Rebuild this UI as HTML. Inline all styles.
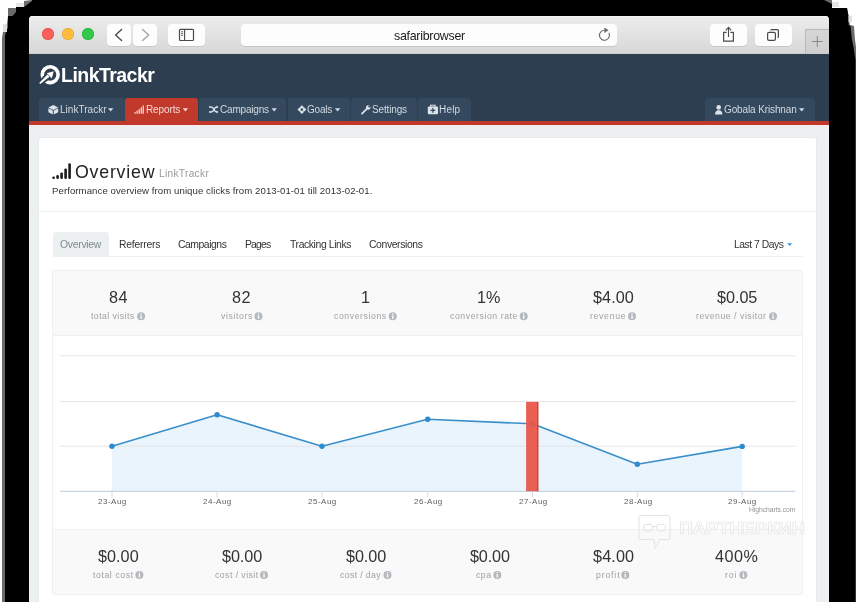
<!DOCTYPE html>
<html><head><meta charset="utf-8"><style>
html,body{margin:0;padding:0;}
body{width:857px;height:602px;position:relative;overflow:hidden;background:#fff;font-family:"Liberation Sans",sans-serif;}
.t{position:absolute;white-space:nowrap;will-change:transform;}
svg{position:absolute;left:0;top:0;}
</style></head><body>
<svg width="857" height="602" style="position:absolute;left:0;top:0;"><path d="M2,602 L2,38 L3,32 L6,31 L8,16 L8,8 L16,8 L16,7 L24,7 L24,1 L32,0 L832,0 L832,8 L847,8 L848.5,16 L850,25 L854,26 L855,40 L856,47 L856,602 Z" fill="#6b6b6b"/><path d="M5,602 L5,36 L6.5,30 L8,28 L8,16 L12.5,16 L16,12 L16,7 L24,7 L32,1 L32,0 L824,0 L832,4 L832,8 L847,8 L848.5,16 L848.5,25 L850.5,26 L852,40 L853.5,47 L855.5,60 L855.5,602 Z" fill="#000"/><rect x="16" y="3" width="8" height="4" fill="#e6e6e6"/><rect x="3" y="24" width="4" height="8" fill="#e0e0e0"/><rect x="832" y="2" width="7" height="5" fill="#e6e6e6"/><rect x="848.5" y="16" width="3.5" height="6" fill="#e0e0e0"/></svg>
<div id="win" style="position:absolute;left:29px;top:16px;width:800px;height:600px;background:#ecf0f1;border-radius:4px 4px 0 0;overflow:hidden;">
<div style="position:absolute;left:0;top:0;width:800px;height:38px;background:linear-gradient(#ededed,#d7d7d7);"></div>
<div style="position:absolute;left:0;top:0;width:800px;height:1px;background:#f6f6f6;"></div>
<div style="position:absolute;left:0;top:37px;width:800px;height:1px;background:#cdcdcd;"></div>
</div>
<div style="position:absolute;left:42px;top:28px;width:12px;height:12px;border-radius:50%;background:#fc605c;box-shadow:inset 0 0 0 0.5px #e0443e;"></div>
<div style="position:absolute;left:62px;top:28px;width:12px;height:12px;border-radius:50%;background:#fdbc40;box-shadow:inset 0 0 0 0.5px #dea123;"></div>
<div style="position:absolute;left:82px;top:28px;width:12px;height:12px;border-radius:50%;background:#34c84a;box-shadow:inset 0 0 0 0.5px #1aab29;"></div>
<div style="position:absolute;left:107px;top:24px;width:24px;height:22px;background:#fdfdfd;border-radius:4px;box-shadow:0 0.5px 0.5px rgba(0,0,0,0.18);"></div>
<div style="position:absolute;left:133px;top:24px;width:24px;height:22px;background:#fdfdfd;border-radius:4px;box-shadow:0 0.5px 0.5px rgba(0,0,0,0.18);"></div>
<div style="position:absolute;left:168px;top:24px;width:37px;height:22px;background:#fdfdfd;border-radius:4px;box-shadow:0 0.5px 0.5px rgba(0,0,0,0.18);"></div>
<div style="position:absolute;left:241px;top:24px;width:376px;height:22px;background:#fdfdfd;border-radius:4px;box-shadow:0 0.5px 0.5px rgba(0,0,0,0.18);"></div>
<div style="position:absolute;left:710px;top:24px;width:37px;height:22px;background:#fdfdfd;border-radius:4px;box-shadow:0 0.5px 0.5px rgba(0,0,0,0.18);"></div>
<div style="position:absolute;left:755px;top:24px;width:37px;height:22px;background:#fdfdfd;border-radius:4px;box-shadow:0 0.5px 0.5px rgba(0,0,0,0.18);"></div>
<div style="position:absolute;left:805px;top:29px;width:24px;height:25px;background:linear-gradient(#d6d6d6,#cfcfcf);border-left:1px solid #b8b8b8;border-top:1px solid #b8b8b8;box-sizing:border-box;"></div>
<div class="t" style="left:394.12px;top:29.00px;font-size:12.4px;line-height:14px;color:#1a1a1a;letter-spacing:-0.266px;">safaribrowser</div>
<div style="position:absolute;left:29px;top:54px;width:800px;height:67px;background:#2c3e50;"></div>
<div style="position:absolute;left:29px;top:121px;width:800px;height:3.5px;background:#c0392b;"></div>
<div style="position:absolute;left:29px;top:124.5px;width:800px;height:1px;background:#f6eaea;"></div>
<div class="t" style="left:60.59px;top:64.00px;font-size:19.5px;line-height:22px;color:#ffffff;letter-spacing:-0.534px;font-weight:bold;">LinkTrackr</div>
<div style="position:absolute;left:39.3px;top:97.7px;width:85.3px;height:26.299999999999997px;background:#34495e;border-radius:3px 3px 0 0;"></div>
<div style="position:absolute;left:125.1px;top:97.7px;width:73.0px;height:26.299999999999997px;background:#c0392b;border-radius:3px 3px 0 0;"></div>
<div style="position:absolute;left:198.6px;top:97.7px;width:87.4px;height:26.299999999999997px;background:#34495e;border-radius:3px 3px 0 0;"></div>
<div style="position:absolute;left:287.5px;top:97.7px;width:62.80000000000001px;height:26.299999999999997px;background:#34495e;border-radius:3px 3px 0 0;"></div>
<div style="position:absolute;left:351.3px;top:97.7px;width:65.59999999999997px;height:26.299999999999997px;background:#34495e;border-radius:3px 3px 0 0;"></div>
<div style="position:absolute;left:418.3px;top:97.7px;width:52.5px;height:26.299999999999997px;background:#34495e;border-radius:3px 3px 0 0;"></div>
<div style="position:absolute;left:705.1px;top:97.7px;width:109.5px;height:26.299999999999997px;background:#34495e;border-radius:3px 3px 0 0;"></div>
<div style="position:absolute;left:29px;top:121px;width:800px;height:3.5px;background:#c0392b;"></div>
<div class="t" style="left:59.97px;top:104.00px;font-size:10px;line-height:11px;color:#d3dae1;letter-spacing:0.028px;">LinkTrackr</div>
<div class="t" style="left:146.07px;top:104.00px;font-size:10px;line-height:11px;color:#f6d9d5;letter-spacing:-0.108px;">Reports</div>
<div class="t" style="left:220.24px;top:104.00px;font-size:10px;line-height:11px;color:#d3dae1;letter-spacing:-0.191px;">Campaigns</div>
<div class="t" style="left:307.45px;top:104.00px;font-size:10px;line-height:11px;color:#d3dae1;letter-spacing:-0.219px;">Goals</div>
<div class="t" style="left:372.14px;top:104.00px;font-size:10px;line-height:11px;color:#d3dae1;letter-spacing:-0.147px;">Settings</div>
<div class="t" style="left:439.27px;top:104.00px;font-size:10px;line-height:11px;color:#d3dae1;letter-spacing:0.180px;">Help</div>
<div class="t" style="left:724.15px;top:104.00px;font-size:10px;line-height:11px;color:#d3dae1;letter-spacing:-0.124px;">Gobala Krishnan</div>
<div style="position:absolute;left:38px;top:137px;width:778.5px;height:480px;background:#fff;border:1px solid #e6eaec;border-radius:3px;box-sizing:border-box;"></div>
<div style="position:absolute;left:39px;top:211px;width:777px;height:1px;background:#eef1f2;"></div>
<div class="t" style="left:74.80px;top:162.00px;font-size:17.8px;line-height:20px;color:#222;letter-spacing:0.773px;">Overview</div>
<div class="t" style="left:159.27px;top:168.00px;font-size:10.2px;line-height:11px;color:#999;letter-spacing:0.289px;">LinkTrackr</div>
<div class="t" style="left:52.22px;top:185.00px;font-size:9.6px;line-height:11px;color:#333;letter-spacing:0.081px;">Performance overview from unique clicks from 2013-01-01 till 2013-02-01.</div>
<div style="position:absolute;left:52.6px;top:231.9px;width:56.5px;height:24.6px;background:#ecf0f1;border-radius:3px 3px 0 0;"></div>
<div style="position:absolute;left:53px;top:256px;width:750px;height:1px;background:#eef0f1;"></div>
<div class="t" style="left:60.07px;top:239.00px;font-size:10.4px;line-height:11px;color:#7f8c8d;letter-spacing:-0.280px;">Overview</div>
<div class="t" style="left:119.00px;top:239.00px;font-size:10.4px;line-height:11px;color:#333;letter-spacing:-0.240px;">Referrers</div>
<div class="t" style="left:178.22px;top:239.00px;font-size:10.4px;line-height:11px;color:#333;letter-spacing:-0.465px;">Campaigns</div>
<div class="t" style="left:245.00px;top:239.00px;font-size:10.4px;line-height:11px;color:#333;letter-spacing:-0.846px;">Pages</div>
<div class="t" style="left:289.56px;top:239.00px;font-size:10.4px;line-height:11px;color:#333;letter-spacing:-0.398px;">Tracking Links</div>
<div class="t" style="left:369.12px;top:239.00px;font-size:10.4px;line-height:11px;color:#333;letter-spacing:-0.385px;">Conversions</div>
<div class="t" style="left:733.55px;top:239.00px;font-size:10.4px;line-height:11px;color:#333;letter-spacing:-0.497px;">Last 7 Days</div>
<div style="position:absolute;left:52px;top:270px;width:751px;height:65px;background:#f9f9f9;border:1px solid #f0f0f0;border-bottom:none;border-radius:3px 3px 0 0;box-sizing:border-box;"></div>
<div style="position:absolute;left:52px;top:335px;width:751px;height:193.5px;background:#fff;border-left:1px solid #f0f0f0;border-right:1px solid #f0f0f0;border-top:1px solid #f0f0f0;box-sizing:border-box;"></div>
<div style="position:absolute;left:52px;top:528.5px;width:751px;height:66.5px;background:#f9f9f9;border:1px solid #f0f0f0;border-top:1px solid #eef0f2;border-radius:0 0 3px 3px;box-sizing:border-box;"></div>
<div class="t" style="left:108.55px;top:288.00px;font-size:16.2px;line-height:18px;color:#333;letter-spacing:0.537px;">84</div>
<div class="t" style="left:91.00px;top:311.00px;font-size:8.7px;line-height:10px;color:#a0a0a0;letter-spacing:0.455px;">total visits</div>
<div class="t" style="left:232.35px;top:288.00px;font-size:16.2px;line-height:18px;color:#333;letter-spacing:0.584px;">82</div>
<div class="t" style="left:220.75px;top:311.00px;font-size:8.7px;line-height:10px;color:#a0a0a0;letter-spacing:0.617px;">visitors</div>
<div class="t" style="left:361.25px;top:288.00px;font-size:16.2px;line-height:18px;color:#333;letter-spacing:0.000px;">1</div>
<div class="t" style="left:334.08px;top:311.00px;font-size:8.7px;line-height:10px;color:#a0a0a0;letter-spacing:0.582px;">conversions</div>
<div class="t" style="left:477.25px;top:288.00px;font-size:16.2px;line-height:18px;color:#333;letter-spacing:0.068px;">1%</div>
<div class="t" style="left:450.08px;top:311.00px;font-size:8.7px;line-height:10px;color:#a0a0a0;letter-spacing:0.569px;">conversion rate</div>
<div class="t" style="left:592.83px;top:288.00px;font-size:16.2px;line-height:18px;color:#333;letter-spacing:0.091px;">$4.00</div>
<div class="t" style="left:589.59px;top:311.00px;font-size:8.7px;line-height:10px;color:#a0a0a0;letter-spacing:0.683px;">revenue</div>
<div class="t" style="left:716.53px;top:288.00px;font-size:16.2px;line-height:18px;color:#333;letter-spacing:-0.038px;">$0.05</div>
<div class="t" style="left:695.89px;top:311.00px;font-size:8.7px;line-height:10px;color:#a0a0a0;letter-spacing:0.536px;">revenue / visitor</div>
<div class="t" style="left:98.03px;top:547.00px;font-size:16.2px;line-height:18px;color:#333;letter-spacing:0.038px;">$0.00</div>
<div class="t" style="left:92.80px;top:570.00px;font-size:8.7px;line-height:10px;color:#a0a0a0;letter-spacing:0.594px;">total cost</div>
<div class="t" style="left:222.03px;top:547.00px;font-size:16.2px;line-height:18px;color:#333;letter-spacing:-0.079px;">$0.00</div>
<div class="t" style="left:214.78px;top:570.00px;font-size:8.7px;line-height:10px;color:#a0a0a0;letter-spacing:0.456px;">cost / visit</div>
<div class="t" style="left:346.03px;top:547.00px;font-size:16.2px;line-height:18px;color:#333;letter-spacing:-0.079px;">$0.00</div>
<div class="t" style="left:339.78px;top:570.00px;font-size:8.7px;line-height:10px;color:#a0a0a0;letter-spacing:0.373px;">cost / day</div>
<div class="t" style="left:469.53px;top:547.00px;font-size:16.2px;line-height:18px;color:#333;letter-spacing:-0.139px;">$0.00</div>
<div class="t" style="left:476.08px;top:570.00px;font-size:8.7px;line-height:10px;color:#a0a0a0;letter-spacing:0.504px;">cpa</div>
<div class="t" style="left:592.53px;top:547.00px;font-size:16.2px;line-height:18px;color:#333;letter-spacing:0.151px;">$4.00</div>
<div class="t" style="left:595.52px;top:570.00px;font-size:8.7px;line-height:10px;color:#a0a0a0;letter-spacing:0.846px;">profit</div>
<div class="t" style="left:715.11px;top:547.00px;font-size:16.2px;line-height:18px;color:#333;letter-spacing:0.458px;">400%</div>
<div class="t" style="left:725.09px;top:570.00px;font-size:8.7px;line-height:10px;color:#a0a0a0;letter-spacing:0.942px;">roi</div>
<div class="t" style="left:98.23px;top:497.00px;font-size:8px;line-height:9px;color:#606060;letter-spacing:0.499px;">23-Aug</div>
<div class="t" style="left:203.33px;top:497.00px;font-size:8px;line-height:9px;color:#606060;letter-spacing:0.499px;">24-Aug</div>
<div class="t" style="left:308.23px;top:497.00px;font-size:8px;line-height:9px;color:#606060;letter-spacing:0.499px;">25-Aug</div>
<div class="t" style="left:413.93px;top:497.00px;font-size:8px;line-height:9px;color:#606060;letter-spacing:0.499px;">26-Aug</div>
<div class="t" style="left:518.73px;top:497.00px;font-size:8px;line-height:9px;color:#606060;letter-spacing:0.499px;">27-Aug</div>
<div class="t" style="left:623.53px;top:497.00px;font-size:8px;line-height:9px;color:#606060;letter-spacing:0.499px;">28-Aug</div>
<div class="t" style="left:728.43px;top:497.00px;font-size:8px;line-height:9px;color:#606060;letter-spacing:0.499px;">29-Aug</div>
<div class="t" style="left:749.43px;top:506.00px;font-size:6.8px;line-height:7px;color:#959595;letter-spacing:-0.055px;">Highcharts.com</div>
<svg width="857" height="602" viewBox="0 0 857 602"><polyline points="121.6,29.5 115.6,35 121.6,40.6" fill="none" stroke="#4a4a4a" stroke-width="1.4" stroke-linecap="round" stroke-linejoin="round"/>
<polyline points="142.6,29.5 148.6,35 142.6,40.6" fill="none" stroke="#a6a6a6" stroke-width="1.4" stroke-linecap="round" stroke-linejoin="round"/>
<rect x="179.5" y="29.3" width="14" height="11.2" rx="1" fill="none" stroke="#4a4a4a" stroke-width="1.2"/>
<line x1="184.6" y1="29.3" x2="184.6" y2="40.5" stroke="#4a4a4a" stroke-width="1.1"/>
<line x1="181" y1="31.8" x2="183.2" y2="31.8" stroke="#4a4a4a" stroke-width="0.8"/>
<line x1="181" y1="33.6" x2="183.2" y2="33.6" stroke="#4a4a4a" stroke-width="0.8"/>
<line x1="181" y1="35.4" x2="183.2" y2="35.4" stroke="#4a4a4a" stroke-width="0.8"/>
<path d="M604.8,30.3 A5,5 0 1 0 608.8,32.8" fill="none" stroke="#6a6a6a" stroke-width="1.1"/>
<polygon points="604.4,27.5 608.6,30.3 604.4,33.1" fill="#6a6a6a"/>
<path d="M726.6,32.4 H723.6 V41.2 H733.4 V32.4 H730.4" fill="none" stroke="#4a4a4a" stroke-width="1.2" stroke-linejoin="round"/>
<line x1="728.5" y1="27.6" x2="728.5" y2="37" stroke="#4a4a4a" stroke-width="1.1"/>
<polyline points="725.8,30.4 728.5,27.4 731.2,30.4" fill="none" stroke="#4a4a4a" stroke-width="1.1"/>
<rect x="767.6" y="32.4" width="7.8" height="8" rx="1.4" fill="none" stroke="#4a4a4a" stroke-width="1.2"/>
<path d="M770.6,30.6 Q770.6,29.6 771.6,29.6 H777.4 Q778.4,29.6 778.4,30.6 V36.4 Q778.4,37.4 777.4,37.4" fill="none" stroke="#4a4a4a" stroke-width="1.2"/>
<line x1="811.8" y1="41.5" x2="822.8" y2="41.5" stroke="#888" stroke-width="1"/>
<line x1="817.3" y1="36" x2="817.3" y2="47" stroke="#888" stroke-width="1"/>
<circle cx="50.2" cy="74.7" r="7.9" fill="none" stroke="#fff" stroke-width="3.6"/>
<polygon points="38.6,82.4 46.6,73.8 50.4,77.6 41,84.6" fill="#2c3e50" stroke="#2c3e50" stroke-width="1.6" stroke-linejoin="round"/>
<polygon points="39.2,82.9 47.4,74.6 49.6,76.8 40.3,83.9" fill="#fff"/>
<polygon points="53.7,71.3 46.6,73.3 48.6,75 50,76.4 51.8,78.4" fill="#fff"/>
<polygon points="108,108.3 113.4,108.3 110.7,111.4" fill="#d3dae1"/>
<polygon points="182.7,108.3 188.1,108.3 185.39999999999998,111.4" fill="#f6d9d5"/>
<polygon points="271.5,108.3 276.9,108.3 274.2,111.4" fill="#d3dae1"/>
<polygon points="334.9,108.3 340.29999999999995,108.3 337.59999999999997,111.4" fill="#d3dae1"/>
<polygon points="799,108.3 804.4,108.3 801.7,111.4" fill="#d3dae1"/>
<g fill="#dce3ea"><polygon points="53.3,104.9 58.2,107.4 53.3,109.9 48.4,107.4"/><polygon points="48.4,108.3 52.8,110.6 52.8,114.6 48.4,112.2"/><polygon points="58.2,108.3 53.8,110.6 53.8,114.6 58.2,112.2"/></g>
<rect x="134.4" y="112.10000000000001" width="1.3" height="1.6" fill="#f6d9d5"/>
<rect x="136.5" y="110.7" width="1.3" height="3.0" fill="#f6d9d5"/>
<rect x="138.6" y="109.10000000000001" width="1.3" height="4.6" fill="#f6d9d5"/>
<rect x="140.7" y="107.3" width="1.3" height="6.4" fill="#f6d9d5"/>
<rect x="142.6" y="105.4" width="1.3" height="8.3" fill="#f6d9d5"/>
<g fill="none" stroke="#dce3ea" stroke-width="1.4"><path d="M209,107 H211 Q213,107 214,109.5 Q215,112 217,112 H217.5"/><path d="M209,112 H211 Q213,112 214,109.5 Q215,107 217,107 H217.5"/></g>
<polygon points="216.6,105.4 218.4,107 216.6,108.6" fill="#dce3ea"/><polygon points="216.6,110.4 218.4,112 216.6,113.6" fill="#dce3ea"/>
<polygon points="301.9,105.2 306.3,109.6 301.9,114 297.5,109.6" fill="#dce3ea"/><rect x="300.9" y="108.6" width="2" height="2" fill="#1f2d3a"/><g stroke="#34495e" stroke-width="0.6" opacity="0.7"><line x1="299.6" y1="107.3" x2="300.6" y2="108.3"/><line x1="304.2" y1="107.3" x2="303.2" y2="108.3"/><line x1="299.6" y1="111.9" x2="300.6" y2="110.9"/><line x1="304.2" y1="111.9" x2="303.2" y2="110.9"/></g>
<g fill="#dce3ea"><circle cx="368.2" cy="107.5" r="2.3"/><line x1="362" y1="113.6" x2="367.5" y2="108.2" stroke="#dce3ea" stroke-width="1.8" stroke-linecap="round"/></g><circle cx="369.2" cy="106.5" r="1" fill="#34495e"/>
<rect x="427.8" y="106.6" width="10.2" height="7.6" rx="1" fill="#dce3ea"/><rect x="430.6" y="105.2" width="4.6" height="2.2" fill="none" stroke="#dce3ea" stroke-width="1"/><path d="M432.9,108 V112.8 M430.5,110.4 H435.3" stroke="#34495e" stroke-width="1.3"/>
<circle cx="718.7" cy="107.4" r="2.3" fill="#dce3ea"/><path d="M715,114.4 Q715,110.4 718.7,110.2 Q722.4,110.4 722.4,114.4 Z" fill="#dce3ea"/>
<rect x="52.300000000000004" y="176.5" width="2.6" height="2.5" rx="1.2" fill="#1a1a1a"/>
<rect x="56.300000000000004" y="175.1" width="2.6" height="3.9" rx="1.2" fill="#1a1a1a"/>
<rect x="60.300000000000004" y="172.6" width="2.6" height="6.4" rx="1.2" fill="#1a1a1a"/>
<rect x="64.3" y="168.6" width="2.6" height="10.4" rx="1.2" fill="#1a1a1a"/>
<rect x="68.3" y="163.2" width="2.6" height="15.8" rx="1.2" fill="#1a1a1a"/>
<polygon points="787.2,243.3 792.2,243.3 789.7,246" fill="#3498db"/>
<circle cx="141.05" cy="316.3" r="4" fill="#b4b9be"/><rect x="140.35000000000002" y="315.40000000000003" width="1.5" height="3.4" fill="#f9f9f9"/><circle cx="141.05" cy="314.0" r="0.8" fill="#f9f9f9"/>
<circle cx="258.45" cy="316.3" r="4" fill="#b4b9be"/><rect x="257.75" y="315.40000000000003" width="1.5" height="3.4" fill="#f9f9f9"/><circle cx="258.45" cy="314.0" r="0.8" fill="#f9f9f9"/>
<circle cx="392.75" cy="316.3" r="4" fill="#b4b9be"/><rect x="392.05" y="315.40000000000003" width="1.5" height="3.4" fill="#f9f9f9"/><circle cx="392.75" cy="314.0" r="0.8" fill="#f9f9f9"/>
<circle cx="523.7" cy="316.3" r="4" fill="#b4b9be"/><rect x="523.0" y="315.40000000000003" width="1.5" height="3.4" fill="#f9f9f9"/><circle cx="523.7" cy="314.0" r="0.8" fill="#f9f9f9"/>
<circle cx="632.0" cy="316.3" r="4" fill="#b4b9be"/><rect x="631.3" y="315.40000000000003" width="1.5" height="3.4" fill="#f9f9f9"/><circle cx="632.0" cy="314.0" r="0.8" fill="#f9f9f9"/>
<circle cx="773.0" cy="316.3" r="4" fill="#b4b9be"/><rect x="772.3" y="315.40000000000003" width="1.5" height="3.4" fill="#f9f9f9"/><circle cx="773.0" cy="314.0" r="0.8" fill="#f9f9f9"/>
<circle cx="139.35" cy="575" r="4" fill="#b4b9be"/><rect x="138.65" y="574.1" width="1.5" height="3.4" fill="#f9f9f9"/><circle cx="139.35" cy="572.7" r="0.8" fill="#f9f9f9"/>
<circle cx="264.0" cy="575" r="4" fill="#b4b9be"/><rect x="263.3" y="574.1" width="1.5" height="3.4" fill="#f9f9f9"/><circle cx="264.0" cy="572.7" r="0.8" fill="#f9f9f9"/>
<circle cx="387.5" cy="575" r="4" fill="#b4b9be"/><rect x="386.8" y="574.1" width="1.5" height="3.4" fill="#f9f9f9"/><circle cx="387.5" cy="572.7" r="0.8" fill="#f9f9f9"/>
<circle cx="497.3" cy="575" r="4" fill="#b4b9be"/><rect x="496.6" y="574.1" width="1.5" height="3.4" fill="#f9f9f9"/><circle cx="497.3" cy="572.7" r="0.8" fill="#f9f9f9"/>
<circle cx="625.3" cy="575" r="4" fill="#b4b9be"/><rect x="624.5999999999999" y="574.1" width="1.5" height="3.4" fill="#f9f9f9"/><circle cx="625.3" cy="572.7" r="0.8" fill="#f9f9f9"/>
<circle cx="743.4" cy="575" r="4" fill="#b4b9be"/><rect x="742.6999999999999" y="574.1" width="1.5" height="3.4" fill="#f9f9f9"/><circle cx="743.4" cy="572.7" r="0.8" fill="#f9f9f9"/>
<path d="M112,491.3 L112,446.3 L217.1,414.7 L322,446.3 L427.7,419.3 L532.5,423.8 L637.3,464.3 L742.2,446.4 L742.2,491.3 Z" fill="#eaf4fc"/>
<line x1="60" y1="355.7" x2="795.3" y2="355.7" stroke="#e3e3e3" stroke-width="1.1" stroke-opacity="0.9"/>
<line x1="60" y1="401.5" x2="795.3" y2="401.5" stroke="#e3e3e3" stroke-width="1.1" stroke-opacity="0.9"/>
<line x1="60" y1="446.3" x2="795.3" y2="446.3" stroke="#e3e3e3" stroke-width="1.1" stroke-opacity="0.9"/>
<line x1="60" y1="491.3" x2="795.3" y2="491.3" stroke="#c9d5e0" stroke-width="1.2"/>
<line x1="112" y1="491.3" x2="112" y2="497.5" stroke="#d3dde6" stroke-width="1"/>
<line x1="217.1" y1="491.3" x2="217.1" y2="497.5" stroke="#d3dde6" stroke-width="1"/>
<line x1="322" y1="491.3" x2="322" y2="497.5" stroke="#d3dde6" stroke-width="1"/>
<line x1="427.7" y1="491.3" x2="427.7" y2="497.5" stroke="#d3dde6" stroke-width="1"/>
<line x1="532.5" y1="491.3" x2="532.5" y2="497.5" stroke="#d3dde6" stroke-width="1"/>
<line x1="637.3" y1="491.3" x2="637.3" y2="497.5" stroke="#d3dde6" stroke-width="1"/>
<line x1="742.2" y1="491.3" x2="742.2" y2="497.5" stroke="#d3dde6" stroke-width="1"/>
<polyline points="112,446.3 217.1,414.7 322,446.3 427.7,419.3 532.5,423.8 637.3,464.3 742.2,446.4" fill="none" stroke="#3a8fcb" stroke-width="1.6" stroke-linejoin="round"/>
<circle cx="112" cy="446.3" r="2.7" fill="#2d8ccc"/>
<circle cx="217.1" cy="414.7" r="2.7" fill="#2d8ccc"/>
<circle cx="322" cy="446.3" r="2.7" fill="#2d8ccc"/>
<circle cx="427.7" cy="419.3" r="2.7" fill="#2d8ccc"/>
<circle cx="532.5" cy="423.8" r="2.7" fill="#2d8ccc"/>
<circle cx="637.3" cy="464.3" r="2.7" fill="#2d8ccc"/>
<circle cx="742.2" cy="446.4" r="2.7" fill="#2d8ccc"/>
<rect x="526.1" y="401.9" width="12.2" height="89.3" fill="#e8574a" fill-opacity="0.95"/>
<rect x="537" y="401.9" width="1.3" height="89.3" fill="#c9463a"/>
<g opacity="1"><path d="M640.5,515.5 H668.5 Q670,515.5 670,517 V538 Q670,539.5 668.5,539.5 H660 L655,548.5 L654,539.5 H640.5 Q639,539.5 639,538 V517 Q639,515.5 640.5,515.5 Z" fill="none" stroke="#e3e3e3" stroke-width="1"/><rect x="643.5" y="524.5" width="9" height="6.5" rx="2.5" fill="none" stroke="#e3e3e3" stroke-width="1"/><rect x="656.5" y="524.5" width="9" height="6.5" rx="2.5" fill="none" stroke="#e3e3e3" stroke-width="1"/><line x1="652.5" y1="526.5" x2="656.5" y2="526.5" stroke="#e3e3e3" stroke-width="1"/><text x="679.2" y="533.8" font-family="Liberation Sans" font-weight="bold" font-size="17" textLength="126" lengthAdjust="spacingAndGlyphs" fill="#ffffff" fill-opacity="0.5" stroke="#e4e4e4" stroke-width="0.7">ПАРТНЕРКИН</text></g></svg>
</body></html>
